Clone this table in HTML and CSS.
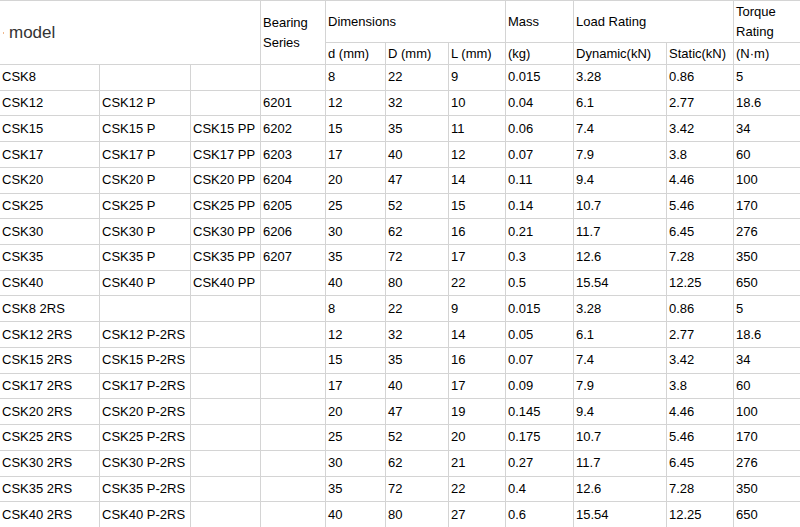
FILE: index.html
```html
<!DOCTYPE html>
<html>
<head>
<meta charset="utf-8">
<link rel="stylesheet" href="styles.css">
</head>
<body>
<div class="wrap">
<table class="spec">
  <colgroup>
    <col class="c1"><col class="c2"><col class="c3"><col class="c4"><col class="c5"><col class="c6"><col class="c7"><col class="c8"><col class="c9"><col class="c10"><col class="c11">
  </colgroup>
  <thead>
    <tr class="h1">
      <td colspan="3" rowspan="2" class="model"><span class="dot"></span>model</td>
      <td rowspan="2">Bearing<br>Series</td>
      <td colspan="3">Dimensions</td>
      <td>Mass</td>
      <td colspan="2">Load Rating</td>
      <td>Torque<br>Rating</td>
    </tr>
    <tr class="h2">
      <td>d (mm)</td><td>D (mm)</td><td>L (mm)</td><td>(kg)</td><td>Dynamic(kN)</td><td>Static(kN)</td><td>(N·m)</td>
    </tr>
  </thead>
  <tbody>
    <tr><td>CSK8</td><td></td><td></td><td></td><td>8</td><td>22</td><td>9</td><td>0.015</td><td>3.28</td><td>0.86</td><td>5</td></tr>
    <tr><td>CSK12</td><td>CSK12 P</td><td></td><td>6201</td><td>12</td><td>32</td><td>10</td><td>0.04</td><td>6.1</td><td>2.77</td><td>18.6</td></tr>
    <tr><td>CSK15</td><td>CSK15 P</td><td>CSK15 PP</td><td>6202</td><td>15</td><td>35</td><td>11</td><td>0.06</td><td>7.4</td><td>3.42</td><td>34</td></tr>
    <tr><td>CSK17</td><td>CSK17 P</td><td>CSK17 PP</td><td>6203</td><td>17</td><td>40</td><td>12</td><td>0.07</td><td>7.9</td><td>3.8</td><td>60</td></tr>
    <tr><td>CSK20</td><td>CSK20 P</td><td>CSK20 PP</td><td>6204</td><td>20</td><td>47</td><td>14</td><td>0.11</td><td>9.4</td><td>4.46</td><td>100</td></tr>
    <tr><td>CSK25</td><td>CSK25 P</td><td>CSK25 PP</td><td>6205</td><td>25</td><td>52</td><td>15</td><td>0.14</td><td>10.7</td><td>5.46</td><td>170</td></tr>
    <tr><td>CSK30</td><td>CSK30 P</td><td>CSK30 PP</td><td>6206</td><td>30</td><td>62</td><td>16</td><td>0.21</td><td>11.7</td><td>6.45</td><td>276</td></tr>
    <tr><td>CSK35</td><td>CSK35 P</td><td>CSK35 PP</td><td>6207</td><td>35</td><td>72</td><td>17</td><td>0.3</td><td>12.6</td><td>7.28</td><td>350</td></tr>
    <tr><td>CSK40</td><td>CSK40 P</td><td>CSK40 PP</td><td></td><td>40</td><td>80</td><td>22</td><td>0.5</td><td>15.54</td><td>12.25</td><td>650</td></tr>
    <tr><td>CSK8 2RS</td><td></td><td></td><td></td><td>8</td><td>22</td><td>9</td><td>0.015</td><td>3.28</td><td>0.86</td><td>5</td></tr>
    <tr><td>CSK12 2RS</td><td>CSK12 P-2RS</td><td></td><td></td><td>12</td><td>32</td><td>14</td><td>0.05</td><td>6.1</td><td>2.77</td><td>18.6</td></tr>
    <tr><td>CSK15 2RS</td><td>CSK15 P-2RS</td><td></td><td></td><td>15</td><td>35</td><td>16</td><td>0.07</td><td>7.4</td><td>3.42</td><td>34</td></tr>
    <tr><td>CSK17 2RS</td><td>CSK17 P-2RS</td><td></td><td></td><td>17</td><td>40</td><td>17</td><td>0.09</td><td>7.9</td><td>3.8</td><td>60</td></tr>
    <tr><td>CSK20 2RS</td><td>CSK20 P-2RS</td><td></td><td></td><td>20</td><td>47</td><td>19</td><td>0.145</td><td>9.4</td><td>4.46</td><td>100</td></tr>
    <tr><td>CSK25 2RS</td><td>CSK25 P-2RS</td><td></td><td></td><td>25</td><td>52</td><td>20</td><td>0.175</td><td>10.7</td><td>5.46</td><td>170</td></tr>
    <tr><td>CSK30 2RS</td><td>CSK30 P-2RS</td><td></td><td></td><td>30</td><td>62</td><td>21</td><td>0.27</td><td>11.7</td><td>6.45</td><td>276</td></tr>
    <tr><td>CSK35 2RS</td><td>CSK35 P-2RS</td><td></td><td></td><td>35</td><td>72</td><td>22</td><td>0.4</td><td>12.6</td><td>7.28</td><td>350</td></tr>
    <tr><td>CSK40 2RS</td><td>CSK40 P-2RS</td><td></td><td></td><td>40</td><td>80</td><td>27</td><td>0.6</td><td>15.54</td><td>12.25</td><td>650</td></tr>
  </tbody>
</table>
</div>
</body>
</html>
```
FILE: styles.css
```css
html, body {
  margin: 0;
  padding: 0;
  background: #fff;
}
.wrap {
  width: 800px;
  height: 527px;
  overflow: hidden;
}
.spec {
  border-collapse: collapse;
  table-layout: fixed;
  width: 814px;
  margin-left: -1px;
  font-family: "Liberation Sans", Arial, sans-serif;
  font-size: 13px;
  line-height: 20px;
  color: #000;
}
.c1 { width: 100px; }
.c2 { width: 91px; }
.c3 { width: 70px; }
.c4 { width: 65px; }
.c5 { width: 60px; }
.c6 { width: 63px; }
.c7 { width: 57px; }
.c8 { width: 68px; }
.c9 { width: 93px; }
.c10 { width: 67px; }
.c11 { width: 80px; }
.spec td {
  border: 1px solid #d4d4d4;
  padding: 0 2px;
  vertical-align: middle;
  white-space: nowrap;
  overflow: hidden;
}
.spec tr.h1 { height: 42px; }
.spec tr.h2 { height: 22px; }
.spec tbody tr { height: 25.72px; }
.spec td.model {
  font-size: 17px;
  color: #333;
  padding-left: 3px;
}
.dot {
  display: inline-block;
  width: 1px;
  height: 2px;
  background: #f0b890;
  margin-right: 5px;
  vertical-align: middle;
}
```
